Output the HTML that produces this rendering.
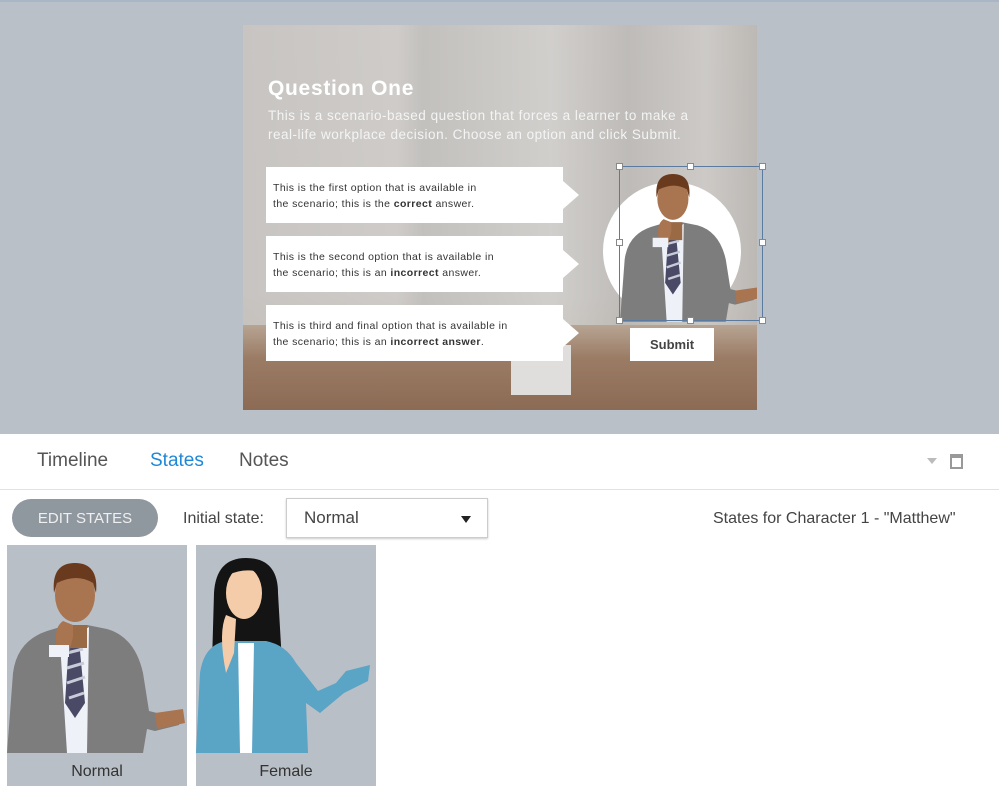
<!DOCTYPE html>
<html><head><meta charset="utf-8"><style>
*{margin:0;padding:0;box-sizing:border-box}
body{width:999px;height:786px;overflow:hidden;background:#fff;font-family:"Liberation Sans",sans-serif;position:relative}
.top{position:absolute;left:0;top:0;width:999px;height:434px;background:#b9c0c8;border-top:2px solid #a9b6c6}
.slide{position:absolute;left:243px;top:23px;width:514px;height:385px;overflow:hidden;background:linear-gradient(180deg,#c9c6c3 0%,#c6c3c0 70%,#b9a99a 78%,#9b7c66 90%,#8a6a55 100%)}
.abs{position:absolute}
.opt{position:absolute;left:23px;width:297px;height:56px;background:#fff;font-size:10.5px;line-height:16px;color:#333;padding:13px 7px;letter-spacing:0.4px}
.opt:after{content:"";position:absolute;right:-16px;top:14px;border-left:16px solid #fff;border-top:14px solid transparent;border-bottom:14px solid transparent}
.tabs{position:absolute;top:450px;font-size:19px;color:#555}
.thumb{position:absolute;top:545px;width:180px;height:241px;background:#b9bfc6}
.thumb span{position:absolute;left:0;right:0;top:218px;text-align:center;font-size:16px;color:#333}
.h{position:absolute;width:7px;height:7px;background:#fff;border:1px solid #888}
</style></head><body>
<svg width="0" height="0" style="position:absolute">
<defs>
<g id="man">
<path d="M0 200 L6 120 Q10 88 40 78 L60 72 L80 72 L100 76 Q128 84 136 120 L142 158 L150 160 L175 158 L172 172 L148 178 L140 176 L136 200 Z" fill="#7d7d7d"/>
<path d="M52 74 L66 84 L82 74 L80 200 L60 200 Z" fill="#eef2f8"/>
<path d="M62 88 L72 88 L78 150 L68 165 L58 150 Z" fill="#4a4a66"/>
<path d="M60 100 L76 96 M60 115 L77 110 M60 130 L78 124 M62 145 L77 140" stroke="#c8ccd8" stroke-width="3"/>
<path d="M60 72 L80 72 L80 95 L60 95 Z" fill="#9a6a45"/>
<ellipse cx="68" cy="42" rx="20" ry="27" fill="#a97450"/>
<path d="M47 40 Q44 10 68 10 Q92 10 89 40 L86 30 Q70 20 50 30 Z" fill="#6a3a1e"/>
<path d="M50 95 Q46 75 56 68 L66 72 L66 84 L62 100 Z" fill="#a97450"/>
<rect x="42" y="92" width="20" height="12" fill="#eef2f8"/>
<path d="M148 160 L176 156 L178 170 L150 176 Z" fill="#a97450"/>
</g>
</defs>
</svg>
<div class="top">
<div class="slide">
<div class="abs" style="left:0;top:0;width:514px;height:300px;background:linear-gradient(90deg,#c7c4c1 0%,#cfccc9 30%,#c2c0bd 35%,#d2d0cd 60%,#bdbab7 75%,#cdcac7 90%,#bbb7b3 100%);opacity:.9"></div>
<div class="abs" style="left:0;top:300px;width:514px;height:85px;background:linear-gradient(180deg,#b7a493 0%,#9a7b64 40%,#8c6b55 100%)"></div>
<div class="abs" style="left:268px;top:320px;width:60px;height:50px;background:#e0dedc"></div>
<div class="abs" style="left:25px;top:52px;font-size:21px;font-weight:bold;color:#fff;letter-spacing:0.7px">Question One</div>
<div class="abs" style="left:25px;top:81px;white-space:nowrap;font-size:13.5px;line-height:19px;color:#f4f4f4;letter-spacing:0.5px">This is a scenario-based question that forces a learner to make a<br>real-life workplace decision. Choose an option and click Submit.</div>
<div class="opt" style="top:142px">This is the first option that is available in<br>the scenario; this is the <b>correct</b> answer.</div>
<div class="opt" style="top:211px">This is the second option that is available in<br>the scenario; this is an <b>incorrect</b> answer.</div>
<div class="opt" style="top:280px">This is third and final option that is available in<br>the scenario; this is an <b>incorrect answer</b>.</div>
<div class="abs" style="left:360px;top:157px;width:138px;height:138px;border-radius:50%;background:#fff"></div>
<svg class="abs" style="left:377px;top:141px" width="140" height="156" viewBox="0 0 180 200"><use href="#man"/></svg>
<div class="abs" style="left:387px;top:303px;width:84px;height:33px;background:#fff;font-size:13px;font-weight:bold;color:#444;text-align:center;line-height:33px">Submit</div>
</div>
<div class="abs" style="left:619px;top:164px;width:144px;height:155px;border:1px solid #5a7aa0"></div>
<div class="h" style="left:616px;top:161px"></div><div class="h" style="left:687px;top:161px"></div><div class="h" style="left:759px;top:161px"></div>
<div class="h" style="left:616px;top:237px"></div><div class="h" style="left:759px;top:237px"></div>
<div class="h" style="left:616px;top:315px"></div><div class="h" style="left:687px;top:315px"></div><div class="h" style="left:759px;top:315px"></div>
</div>
<div class="tabs" style="left:37px">Timeline</div>
<div class="tabs" style="left:150px;color:#1e88d8">States</div>
<div class="tabs" style="left:239px">Notes</div>
<div class="abs" style="left:927px;top:458px;border-top:6px solid #bbb;border-left:5px solid transparent;border-right:5px solid transparent"></div>
<div class="abs" style="left:950px;top:454px;width:13px;height:15px;border:2px solid #999;border-top-width:4px"></div>
<div class="abs" style="left:0;top:489px;width:999px;height:1px;background:#e2e2e2"></div>
<div class="abs" style="left:12px;top:499px;width:146px;height:38px;border-radius:19px;background:#8f979f;color:#f0f0f0;font-size:15px;text-align:center;line-height:40px">EDIT STATES</div>
<div class="abs" style="left:183px;top:510px;font-size:16px;color:#444">Initial state:</div>
<div class="abs" style="left:286px;top:498px;width:202px;height:40px;border:1px solid #ccc;box-shadow:0 1px 2px #ccc;font-size:17px;color:#444;padding:9px 17px">Normal</div>
<div class="abs" style="left:461px;top:516px;border-top:7px solid #222;border-left:5px solid transparent;border-right:5px solid transparent"></div>
<div class="abs" style="left:713px;top:510px;font-size:16px;color:#444">States for Character 1 - "Matthew"</div>
<div class="thumb" style="left:7px"><svg class="abs" style="left:0;top:8px" width="180" height="200" viewBox="0 0 180 200"><use href="#man"/></svg><span>Normal</span></div>
<div class="thumb" style="left:196px">
<svg class="abs" style="left:0;top:8px" width="180" height="200" viewBox="0 0 180 200">
<path d="M18 40 Q20 5 50 5 Q82 5 82 40 L86 110 L16 110 Z" fill="#141414"/>
<path d="M0 200 L4 120 Q8 92 30 88 L70 88 Q90 92 100 110 L122 138 L140 130 L150 118 L174 112 L172 128 L148 140 L124 160 L110 150 L112 200 Z" fill="#5aa4c6"/>
<path d="M42 90 L58 90 L56 200 L44 200 Z" fill="#fff"/>
<ellipse cx="48" cy="40" rx="18" ry="26" fill="#f4ccaa"/>
<path d="M30 34 Q32 12 50 12 Q66 14 68 34 L66 20 Q50 14 32 22 Z" fill="#141414"/>
<path d="M30 120 Q22 80 30 62 L40 66 L38 100 Z" fill="#f4ccaa"/>
</svg><span>Female</span></div>
</body></html>
